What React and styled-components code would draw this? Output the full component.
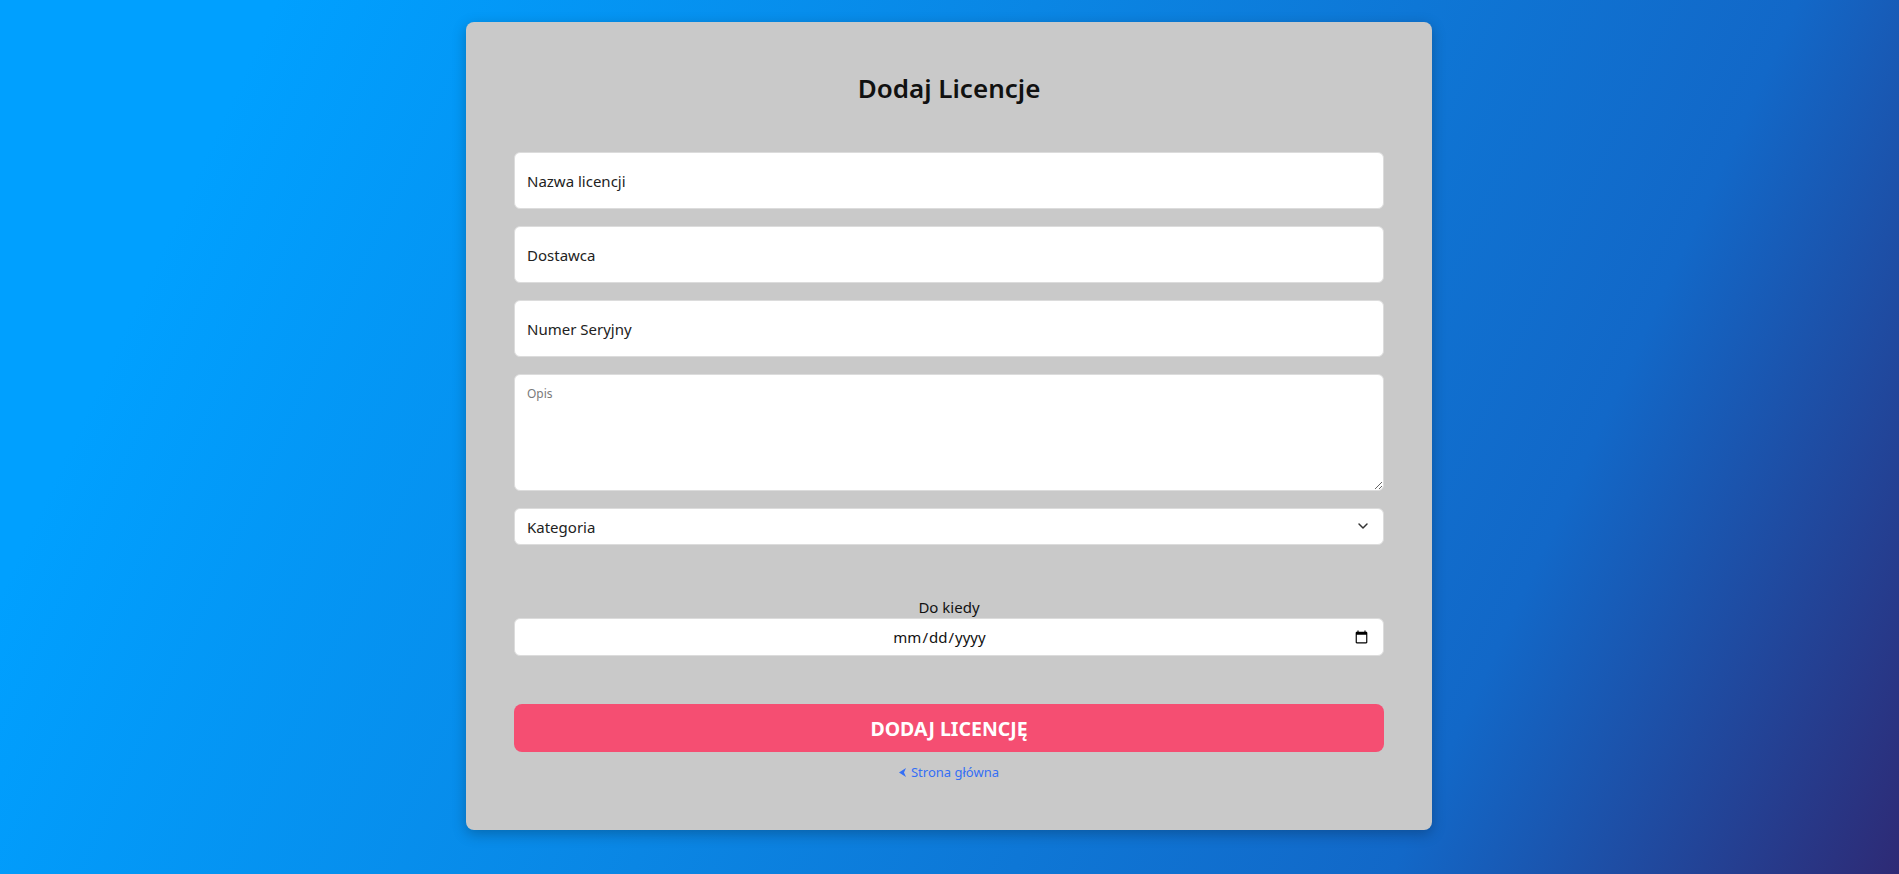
import React from 'react'
import styled, { createGlobalStyle } from 'styled-components'
import { ChevronDown } from 'lucide-react'

const Global = createGlobalStyle`
  *{box-sizing:border-box;}
  html,body{margin:0;padding:0;}
  body{
    font-family:"Noto Sans","Open Sans",sans-serif;
    min-height:874px;
    background:linear-gradient(115deg,#00a0ff 12%,#0a86e4 45%,#1268c8 78%,#2e2a75 100%);
  }
`

const Page = styled.div`
  min-height:874px;
  display:flex;
  justify-content:center;
  align-items:flex-start;
  padding:22px 1px 0 0;
`

const Card = styled.div`
  width:966px;
  height:808px;
  background:#c9c9c9;
  border-radius:8px;
  box-shadow:0 4px 14px rgba(0,0,0,0.25);
  padding:44px 48px 0;
  display:flex;
  flex-direction:column;
`

const Title = styled.h2`
  margin:0 0 42px;
  text-align:center;
  font-size:26px;
  font-weight:600;
  color:#111;
  line-height:44px;
`

const Form = styled.form`
  display:flex;
  flex-direction:column;
  gap:17px;
`

const Field = styled.input`
  width:100%;
  height:57px;
  padding:0 12px;
  border:1px solid #dcdcdc;
  border-radius:6px;
  background:#fff;
  font-family:inherit;
  font-size:15px;
  color:#222;
  outline:none;
  &::placeholder{color:#222;}
`

const Area = styled.textarea`
  width:100%;
  height:117px;
  padding:10px 12px;
  border:1px solid #dcdcdc;
  border-radius:6px;
  background:#fff;
  font-family:inherit;
  font-size:12px;
  color:#222;
  resize:vertical;
  outline:none;
  display:block;
  &::placeholder{color:#7a7a7a;}
`

const SelectWrap = styled.div`
  position:relative;
`

const Select = styled.select`
  width:100%;
  height:37px;
  padding:0 12px;
  border:1px solid #dcdcdc;
  border-radius:6px;
  background:#fff;
  font-family:inherit;
  font-size:15px;
  color:#222;
  appearance:none;
  outline:none;
`

const Chevron = styled.span`
  position:absolute;
  right:13px;
  top:10px;
  color:#333;
  pointer-events:none;
  display:flex;
`

const DateGroup = styled.div`
  margin-top:35px;
  display:flex;
  flex-direction:column;
  align-items:center;
  gap:1px;
`

const Label = styled.label`
  font-size:15px;
  color:#111;
  line-height:20px;
`

const DateInput = styled.input`
  width:100%;
  height:38px;
  padding:0 12px;
  border:1px solid #dcdcdc;
  border-radius:6px;
  background:#fff;
  font-family:inherit;
  font-size:15px;
  color:#111;
  text-align:center;
  outline:none;
`

const Actions = styled.div`
  margin-top:31px;
  display:flex;
  flex-direction:column;
  align-items:center;
  gap:10px;
`

const Submit = styled.button`
  width:100%;
  height:48px;
  border:none;
  border-radius:8px;
  background:#f54e72;
  color:#fff;
  font-family:inherit;
  font-size:19.5px;
  font-weight:700;
  cursor:pointer;
`

const Back = styled.a`
  display:flex;
  align-items:center;
  gap:5px;
  font-size:13px;
  color:#346ff5;
  text-decoration:none;
  line-height:20px;
`

export default function App() {
  return (
    <>
      <Global />
      <Page>
        <Card>
          <Title>Dodaj Licencje</Title>
          <Form onSubmit={e => e.preventDefault()}>
            <Field placeholder="Nazwa licencji" />
            <Field placeholder="Dostawca" />
            <Field placeholder="Numer Seryjny" />
            <Area placeholder="Opis" />
            <SelectWrap>
              <Select defaultValue="">
                <option value="">Kategoria</option>
                <option value="1">Oprogramowanie</option>
                <option value="2">System</option>
              </Select>
              <Chevron><ChevronDown size={16} strokeWidth={2.2} /></Chevron>
            </SelectWrap>
            <DateGroup>
              <Label htmlFor="do-kiedy">Do kiedy</Label>
              <DateInput id="do-kiedy" type="date" />
            </DateGroup>
            <Actions>
              <Submit type="submit">DODAJ LICENCJĘ</Submit>
              <Back href="#">
                <svg width="7" height="9" viewBox="0 0 7 9">
                  <path d="M7 0 L0 4.5 L7 9 L5 4.5 Z" fill="currentColor" />
                </svg>
                Strona główna
              </Back>
            </Actions>
          </Form>
        </Card>
      </Page>
    </>
  )
}
